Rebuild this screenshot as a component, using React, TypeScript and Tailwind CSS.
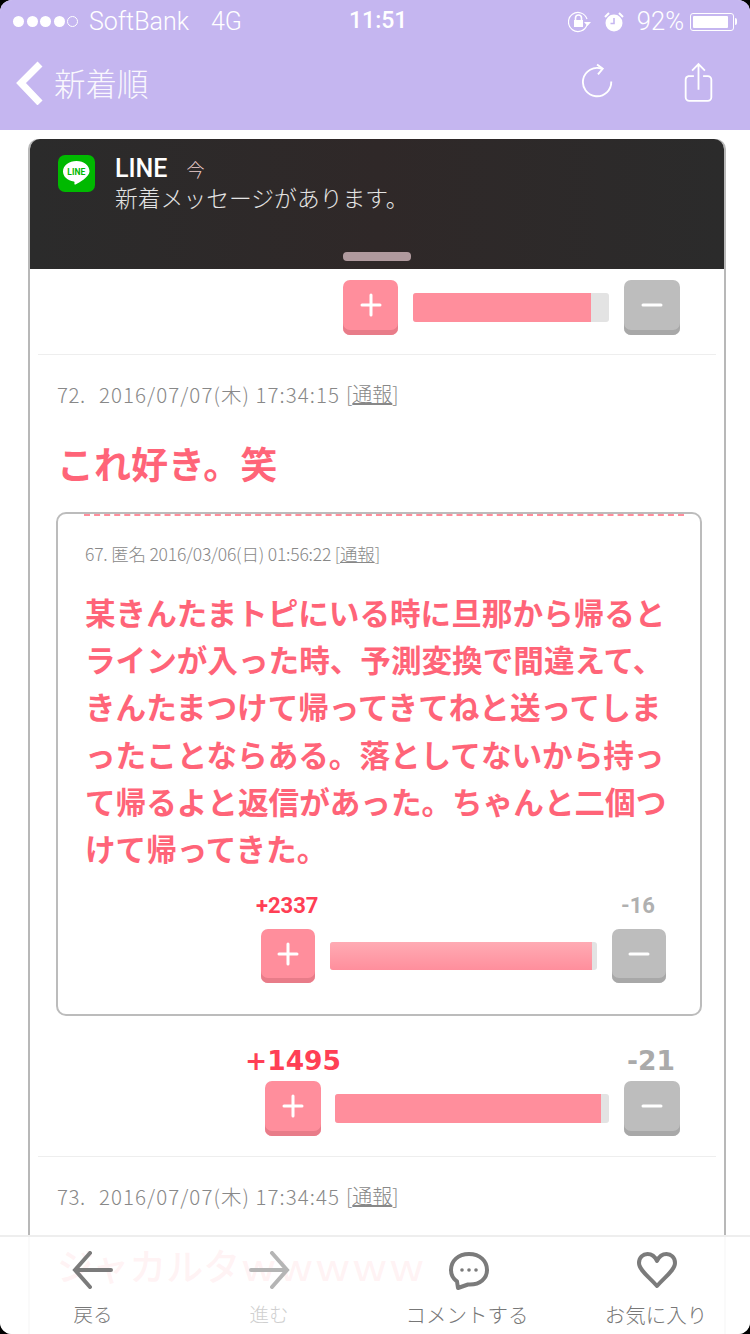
import React from "react";

const jp = "font-['Noto_Sans_CJK_JP',sans-serif]";

const quoteLines = [
  "某きんたまトピにいる時に旦那から帰ると",
  "ラインが入った時、予測変換で間違えて、",
  "きんたまつけて帰ってきてねと送ってしま",
  "ったことならある。落としてないから持っ",
  "て帰るよと返信があった。ちゃんと二個つ",
  "けて帰ってきた。",
];

function VoteButton({ kind, size }: { kind: "plus" | "minus"; size: string }) {
  const color = kind === "plus" ? "bg-[#ff8e9c] shadow-[inset_0_-5px_0_#e87c89]" : "bg-[#bdbdbd] shadow-[inset_0_-5px_0_#a8a8a8]";
  return (
    <div className={`${size} ${color} shrink-0 rounded-[7px] flex items-center justify-center pb-[5px]`}>
      <svg width="28" height="28" viewBox="0 0 28 28" fill="none" stroke="white" strokeWidth="3" strokeLinecap="round">
        <path d="M5 14h18" />
        {kind === "plus" && <path d="M14 4v20" />}
      </svg>
    </div>
  );
}

function VoteBar({ fill, soft, height }: { fill: string; soft?: boolean; height: string }) {
  return (
    <div className={`flex-1 ${height} bg-[#e3e3e3] rounded-[3px] overflow-hidden`}>
      <div className={`h-full ${fill} ${soft ? "bg-gradient-to-b from-[#ffabb4] to-[#ff8e9c]" : "bg-[#ff8e9c]"}`} />
    </div>
  );
}

function Meta({ no, stamp }: { no: string; stamp: string }) {
  return (
    <div className={`mt-[24px] ml-[27px] h-[30px] leading-[30px] text-[20.5px] text-[#888] ${jp} font-light whitespace-pre flex`}>
      <span className="w-[42px] tracking-[0.5px]">{no}.</span>
      <span className="tracking-[1.05px]">{stamp}</span>
      <span className="ml-[6px] text-[20px]">[<span className="underline">通報</span>]</span>
    </div>
  );
}

function StatusBar() {
  return (
    <div className="h-[40px] relative flex items-center pt-[3px] text-white font-['Roboto',sans-serif]">
      <div className="ml-[13px] flex gap-[2.5px]">
        {[0, 1, 2, 3].map((i) => (
          <div key={i} className="w-[11px] h-[11px] rounded-full bg-white" />
        ))}
        <div className="w-[11px] h-[11px] rounded-full border border-white" />
      </div>
      <span className="ml-[11px] w-[122px] text-[25px] font-light">SoftBank</span>
      <span className="text-[25px] font-light">4G</span>
      <span className="absolute left-[349px] text-[23px] font-medium">11:51</span>
      <div className="ml-auto mr-[13px] flex items-center">
        <svg width="24" height="22" viewBox="0 0 24 22" fill="none" stroke="white" strokeWidth="1.2">
          <path d="M19 14a9.5 9.5 0 1 1 0-6" />
          <path d="M16 11h7l-3.5 4z" fill="white" stroke="none" />
          <rect x="6" y="9" width="9" height="7" fill="white" stroke="none" />
          <path d="M7.5 9V7a3 3 0 0 1 6 0v2" strokeWidth="1.6" />
        </svg>
        <svg className="ml-[11px]" width="22" height="22" viewBox="0 0 22 22" fill="white">
          <circle cx="11" cy="12" r="8.5" />
          <path d="M11 7v5.5H7.5" stroke="#c5b6f0" strokeWidth="1.6" fill="none" />
          <path d="M2 6l4-4M20 6l-4-4" stroke="white" strokeWidth="2" />
        </svg>
        <span className="ml-[12px] text-[25.5px] font-light">92%</span>
        <div className="ml-[6px] w-[44px] h-[18px] border border-white rounded-[3px] p-[2px]">
          <div className="h-full w-[92%] bg-white rounded-[1px]" />
        </div>
        <div className="w-[2px] h-[7px] ml-[1px] bg-white rounded-r-sm" />
      </div>
    </div>
  );
}

function NavBar() {
  return (
    <div className="h-[90px] flex items-center pb-[4px] text-white">
      <svg className="ml-[15px]" width="29" height="44" viewBox="0 0 29 44" fill="none" stroke="white" strokeWidth="7">
        <path d="M25 3L6 22l19 20" />
      </svg>
      <span className={`ml-[10px] text-[31.5px] font-extralight ${jp} opacity-90`}>新着順</span>
      <svg className="ml-auto -mt-[3px]" width="34" height="37" viewBox="0 0 36 38" fill="none" stroke="white" strokeWidth="2">
        <path d="M22 5.5A15 15 0 1 0 32 19" />
        <path d="M17 1l6 4.5-5 6" />
      </svg>
      <svg className="ml-[67px] mr-[35px] -mt-[2px]" width="33" height="41" viewBox="0 0 36 42" fill="none" stroke="white" strokeWidth="2">
        <path d="M18 2v27M11 8l7-7 7 7" />
        <path d="M13 14H7a4 4 0 0 0-3 4v19a4 4 0 0 0 4 4h20a4 4 0 0 0 4-4V18a4 4 0 0 0-4-4h-5" />
      </svg>
    </div>
  );
}

function Notification() {
  return (
    <div className="absolute -top-[2px] left-0 right-0 h-[130px] rounded-t-[10px] bg-gradient-to-r from-[#2b2b2b] via-[#2f2828] to-[#2b2b2b] flex pl-[28px] pt-[16px]">
      <svg width="37" height="37" viewBox="0 0 37 37" className="shrink-0">
        <rect width="37" height="37" rx="7" fill="#00b900" />
        <path d="M18.5 6C11 6 5 10.6 5 16.4c0 5 4.6 9.2 10.8 10 .9.2.8 1 .6 2.1-.2 1 .6 1.4 1.6.8 2.7-1.6 13.5-7.4 13.5-12.9C31.5 10.6 26 6 18.5 6z" fill="white" />
        <text x="18.3" y="19.5" textAnchor="middle" fontSize="8.5" fontWeight="700" fill="#00b900" fontFamily="Roboto, sans-serif">LINE</text>
      </svg>
      <div className="ml-[20px]">
        <div className="flex items-center h-[27px]">
          <span className="text-white text-[25px] leading-[27px] font-medium font-['Roboto',sans-serif]">LINE</span>
          <span className={`ml-[19px] text-[18px] leading-[22px] text-[#f0d0d0] ${jp} font-light`}>今</span>
        </div>
        <div className={`mt-[1px] text-[22.8px] leading-[29px] text-[#e4e4e4] ${jp} font-light`}>新着メッセージがあります。</div>
      </div>
      <div className="absolute left-[313px] top-[113px] w-[68px] h-[9px] rounded-[4px] bg-[#b09a9e]" />
    </div>
  );
}

function BottomBar() {
  const label = `leading-[28px] ${jp} font-light whitespace-nowrap`;
  return (
    <div className="absolute left-0 right-0 bottom-0 h-[99px] border-t-2 border-[#eeeeee] bg-white/[.92] grid grid-cols-[186px_166px_230px_148px]">
      <div className="flex flex-col items-center">
        <svg className="mt-[14px]" width="42" height="38" viewBox="0 0 42 38" fill="none" stroke="#7b7b7b" strokeWidth="4" strokeLinecap="round">
          <path d="M39 19H4M18 2L3 19l15 17" />
        </svg>
        <span className={`${label} mt-[11px] text-[19.5px] text-[#777]`}>戻る</span>
      </div>
      <div className="flex flex-col items-center">
        <svg className="mt-[14px]" width="42" height="38" viewBox="0 0 42 38" fill="none" stroke="#b5b5b5" strokeWidth="4" strokeLinecap="round">
          <path d="M3 19h35M24 2l15 17-15 17" />
        </svg>
        <span className={`${label} mt-[11px] text-[19.5px] text-[#cfcfcf]`}>進む</span>
      </div>
      <div className="flex flex-col items-center">
        <svg className="mt-[14px] ml-[4px]" width="42" height="40" viewBox="0 0 42 40" fill="none" stroke="#7b7b7b" strokeWidth="4" strokeLinejoin="round">
          <path d="M21 3C10 3 3 10 3 19c0 5 2.5 9 6 11.5l1 6.5 10-3.5h2c10 0 17-6 17-14.5C39 10 32 3 21 3z" />
          <circle cx="14" cy="19" r="1.8" fill="#7b7b7b" stroke="none" />
          <circle cx="21" cy="19" r="1.8" fill="#7b7b7b" stroke="none" />
          <circle cx="28" cy="19" r="1.8" fill="#7b7b7b" stroke="none" />
        </svg>
        <span className={`${label} mt-[9px] text-[20.5px] text-[#777]`}>コメントする</span>
      </div>
      <div className="flex flex-col items-center">
        <svg className="mt-[14px] ml-[2px]" width="42" height="38" viewBox="0 0 42 38" fill="none" stroke="#7b7b7b" strokeWidth="4" strokeLinejoin="round">
          <path d="M21 35C13 26 3 19 3 12 3 6.5 7 3 11.5 3c4 0 7.5 2.5 9.5 7 2-4.5 5.5-7 9.5-7C35 3 39 6.5 39 12c0 7-10 14-18 23z" />
        </svg>
        <span className={`${label} mt-[11px] text-[20.5px] text-[#777]`}>お気に入り</span>
      </div>
    </div>
  );
}

export default function App() {
  return (
    <div className="w-[750px] h-[1334px] bg-black overflow-hidden">
      <div className="relative w-full h-full bg-white rounded-[12px] overflow-hidden flex flex-col">
        <header className="shrink-0 bg-[#c5b6f0]">
          <StatusBar />
          <NavBar />
        </header>

        <main className="flex-1 mt-[9px] ml-[28px] w-[698px] relative border-x-2 border-t-2 border-[#b8b8b8] rounded-t-[10px] flex flex-col">
          <Notification />

          {/* vote row hidden mostly under the banner */}
          <div className="mt-[139px] ml-[313px] mr-[44px] flex items-center gap-[15px]">
            <VoteButton kind="plus" size="w-[55px] h-[55px]" />
            <VoteBar fill="w-[91%]" height="h-[29px] -mt-[1px]" />
            <VoteButton kind="minus" size="w-[56px] h-[55px]" />
          </div>
          <div className="mt-[19px] mx-[8px] h-[1px] bg-[#eeeeee]" />

          <Meta no="72" stamp="2016/07/07(木) 17:34:15" />
          <div className={`mt-[29px] ml-[27px] h-[50px] leading-[50px] text-[37px] font-bold text-[#ff6478] ${jp}`}>これ好き。笑</div>

          <section className="mt-[24px] mx-[26px] w-[646px] relative border-2 border-[#bcbcbc] rounded-[10px] pt-[28px] pb-[31px]">
            <div className="absolute top-0 left-[26px] w-[600px] border-t-2 border-dashed border-[#ff8e9c]" />
            <div className={`ml-[27px] h-[24px] leading-[24px] text-[17.5px] tracking-[-0.2px] text-[#888] ${jp} font-light whitespace-pre`}>
              67. 匿名 2016/03/06(日) 01:56:22 [<span className="underline">通報</span>]
            </div>
            <div className={`mt-[23px] ml-[27px] text-[30.6px] leading-[47.2px] font-bold text-[#ff6478] ${jp} whitespace-nowrap`}>
              {quoteLines.map((line) => (
                <div key={line}>{line}</div>
              ))}
            </div>
            <div className="mt-[21px] ml-[198px] mr-[34px] h-[26px] flex justify-between leading-[26px] text-[22px] font-bold font-['Roboto',sans-serif]">
              <span className="text-[#ff3f55]">+2337</span>
              <span className="mr-[11px] text-[#b0b0b0]">-16</span>
            </div>
            <div className="mt-[10px] ml-[203px] mr-[34px] flex items-center gap-[15px]">
              <VoteButton kind="plus" size="w-[54px] h-[54px]" />
              <VoteBar fill="w-[98%]" soft height="h-[28px] -mt-[1px]" />
              <VoteButton kind="minus" size="w-[54px] h-[54px]" />
            </div>
          </section>

          <div className="mt-[29px] ml-[215px] mr-[49px] h-[32px] flex justify-between leading-[32px] text-[26.5px] font-bold font-['DejaVu_Sans',sans-serif]">
            <span className="text-[#ff3f55]">+1495</span>
            <span className="text-[#aaaaaa]">-21</span>
          </div>
          <div className="mt-[4px] ml-[235px] mr-[44px] flex items-center gap-[14px]">
            <VoteButton kind="plus" size="w-[56px] h-[55px]" />
            <VoteBar fill="w-[97.2%]" height="h-[29px] -mt-[1px] mr-[1px]" />
            <VoteButton kind="minus" size="w-[56px] h-[55px]" />
          </div>
          <div className="mt-[20px] mx-[8px] h-[1px] bg-[#eeeeee]" />

          <Meta no="73" stamp="2016/07/07(木) 17:34:45" />
          <div className={`mt-[29px] ml-[27px] h-[50px] leading-[50px] text-[37px] font-medium text-[#ff6478] ${jp} whitespace-nowrap`}>ジャカルタｗｗｗｗｗ</div>
        </main>

        <BottomBar />
      </div>
    </div>
  );
}
